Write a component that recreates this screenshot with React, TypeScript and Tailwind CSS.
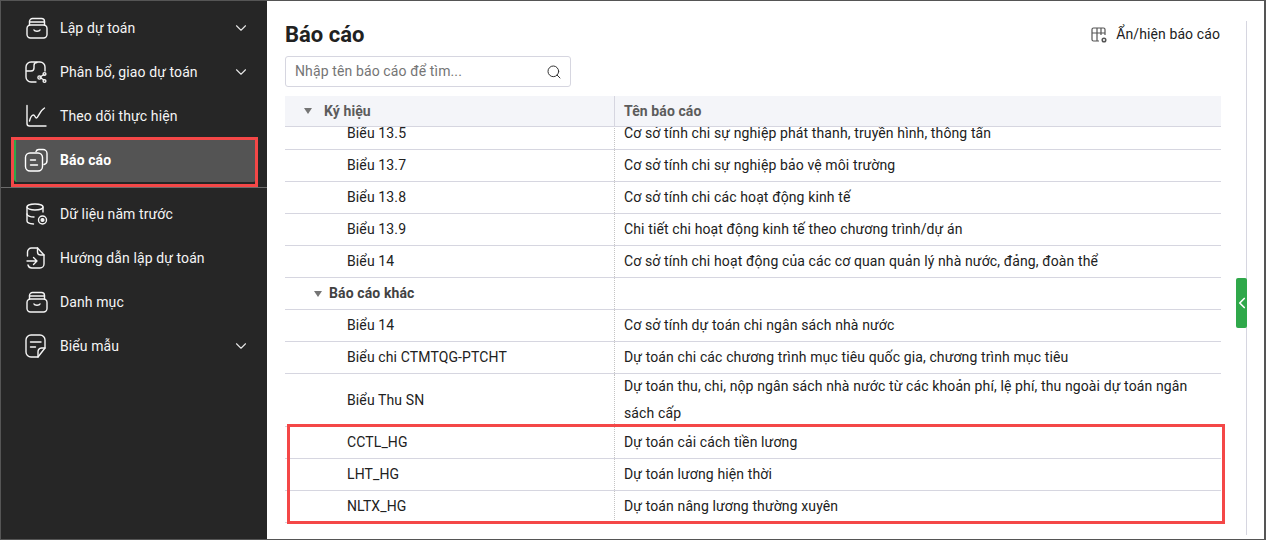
import { ChevronDown, ChevronLeft, Search } from "lucide-react";
import type { ReactNode } from "react";

type Row = { code: string; name: string; group?: boolean; tall?: boolean };

const rows: Row[] = [
  { code: "Biểu 13.5", name: "Cơ sở tính chi sự nghiệp phát thanh, truyền hình, thông tấn" },
  { code: "Biểu 13.7", name: "Cơ sở tính chi sự nghiệp bảo vệ môi trường" },
  { code: "Biểu 13.8", name: "Cơ sở tính chi các hoạt động kinh tế" },
  { code: "Biểu 13.9", name: "Chi tiết chi hoạt động kinh tế theo chương trình/dự án" },
  { code: "Biểu 14", name: "Cơ sở tính chi hoạt động của các cơ quan quản lý nhà nước, đảng, đoàn thể" },
  { code: "Báo cáo khác", name: "", group: true },
  { code: "Biểu 14", name: "Cơ sở tính dự toán chi ngân sách nhà nước" },
  { code: "Biểu chi CTMTQG-PTCHT", name: "Dự toán chi các chương trình mục tiêu quốc gia, chương trình mục tiêu" },
  { code: "Biểu Thu SN", name: "Dự toán thu, chi, nộp ngân sách nhà nước từ các khoản phí, lệ phí, thu ngoài dự toán ngân sách cấp", tall: true },
  { code: "CCTL_HG", name: "Dự toán cải cách tiền lương" },
  { code: "LHT_HG", name: "Dự toán lương hiện thời" },
  { code: "NLTX_HG", name: "Dự toán nâng lương thường xuyên" },
];

function Glyph({ children }: { children: ReactNode }) {
  return (
    <svg width="24" height="24" viewBox="0 0 24 24" fill="none" stroke="currentColor" strokeWidth="1.4" strokeLinecap="round" strokeLinejoin="round">
      {children}
    </svg>
  );
}

const boxIcon = (
  <Glyph>
    <rect x="2" y="9" width="20" height="13" rx="3.5" />
    <path d="M4.500 9V5.500A3 3 0 0 1 7.500 2.500h9a3 3 0 0 1 3 3V9" />
    <path d="M4.500 6h15" />
    <path d="M9 14c.6 1.600 5.400 1.600 6 0" />
  </Glyph>
);

const shareIcon = (
  <Glyph>
    <path d="M11 22H6a5 5 0 0 1-5-5V7a5 5 0 0 1 5-5h9a5 5 0 0 1 5 5v4" />
    <path d="M1.500 11H6a3 3 0 0 0 3-3V5.500a3 3 0 0 1 3-3" />
    <path d="M15 17l4-2.500M15 17.500l4 2.500" />
    <circle cx="14.500" cy="17.500" r="1.600" />
    <circle cx="19.500" cy="14" r="1.400" />
    <circle cx="19.500" cy="21" r="1.400" />
  </Glyph>
);

const chartIcon = (
  <Glyph>
    <path d="M2 1.500v18a2.500 2.500 0 0 0 2.500 2.500H21" />
    <path d="M4.500 17c1-4 2.500-6 4-6s1.500 3 3 3 3-7 8-10" />
  </Glyph>
);

const reportIcon = (
  <Glyph>
    <path d="M12 3.500A3 3 0 0 1 15 1.500h4a4 4 0 0 1 4 4v7a4 4 0 0 1-3 4" />
    <rect x="1.500" y="5" width="17" height="18" rx="4.500" />
    <path d="M6.500 12h5M6.500 17h7" />
  </Glyph>
);

const dataIcon = (
  <Glyph>
    <ellipse cx="10" cy="5" rx="8" ry="3" />
    <path d="M2 5v14c0 1.500 3 2.700 6.500 3" />
    <path d="M18 5v5" />
    <path d="M2 12c0 1.500 3 3 7 3" />
    <circle cx="17.500" cy="18" r="4" />
    <circle cx="17.500" cy="18" r="1.400" fill="currentColor" />
  </Glyph>
);

const guideIcon = (
  <Glyph>
    <path d="M2.500 10V6a4 4 0 0 1 4-4h6l6.500 7v9a4 4 0 0 1-4 4h-8a4 4 0 0 1-4-3" />
    <path d="M12.500 2v4a3 3 0 0 0 3 3H19" />
    <path d="M2 15h10M8.500 11.500 12 15l-3.500 3.500" />
  </Glyph>
);

const formIcon = (
  <Glyph>
    <path d="M13 23H6a5 5 0 0 1-5-5V6a5 5 0 0 1 5-5h9a5 5 0 0 1 5 5v8z" />
    <path d="M13 23v-5a4 4 0 0 1 3.500-4H20" />
    <path d="M5.500 8H16M5.500 13h5" />
  </Glyph>
);

function NavItem({ icon, label, chevron }: { icon: ReactNode; label: string; chevron?: boolean }) {
  return (
    <div className="flex h-11 items-center pl-[24px] pr-[17px] text-[14px] tracking-[0.1px] text-[#f5f5f5]">
      <span className="mr-[11px] flex h-6 w-6 items-center justify-center">{icon}</span>
      <span className="flex-1">{label}</span>
      {chevron && <ChevronDown size={18} strokeWidth={1.5} className="text-[#e5e5e5]" />}
    </div>
  );
}

function Sidebar() {
  return (
    <aside className="relative w-[266px] shrink-0 bg-[#262626] pt-[5px]">
      <NavItem icon={boxIcon} label="Lập dự toán" chevron />
      <NavItem icon={shareIcon} label="Phân bổ, giao dự toán" chevron />
      <NavItem icon={chartIcon} label="Theo dõi thực hiện" />
      <div className="ml-[13px] mr-[11px] flex h-[44px] items-center rounded-[3px] border-l-2 border-[#2fa84a] bg-[#545454] pl-[8px] text-[14px] font-bold tracking-[0.1px] text-white">
        <span className="mr-[12px] flex h-6 w-6 items-center justify-center">{reportIcon}</span>
        Báo cáo
      </div>
      <div className="mt-[5px] mb-[4px] h-px bg-[#6b6b6b]" />
      <NavItem icon={dataIcon} label="Dữ liệu năm trước" />
      <NavItem icon={guideIcon} label="Hướng dẫn lập dự toán" />
      <NavItem icon={boxIcon} label="Danh mục" />
      <NavItem icon={formIcon} label="Biểu mẫu" chevron />
      <div className="absolute left-[10px] top-[136px] h-[50px] w-[247px] border-[3px] border-[#f44747]" />
    </aside>
  );
}

function Triangle() {
  return <span className="h-0 w-0 border-x-[4.5px] border-t-[6px] border-x-transparent border-t-[#757575]" />;
}

function TableRow({ row }: { row: Row }) {
  return (
    <div className={`flex border-b border-[#d6d6e0] text-[14px] leading-[27px] tracking-[0.12px] text-[#212121] ${row.tall ? "h-[53px]" : "h-[32px]"}`}>
      <div className="flex w-[330px] shrink-0 items-center border-r border-dotted border-[#c4c4c4]">
        {row.group ? (
          <span className="flex items-center pl-[29px] font-bold text-[#424242]">
            <Triangle />
            <span className="ml-[7px]">{row.code}</span>
          </span>
        ) : (
          <span className="pl-[62px]">{row.code}</span>
        )}
      </div>
      <div className="flex flex-1 items-center pl-[9px] pr-[24px]">
        <span>{row.name}</span>
      </div>
    </div>
  );
}

function Content() {
  return (
    <div className="w-[936px] shrink-0">
      <div className="flex h-[27px] items-center justify-between">
        <h1 className="text-[22px] leading-none font-bold text-[#212121]">Báo cáo</h1>
        <div className="flex items-center pr-px text-[14px] tracking-[0.1px] text-[#212121]">
          <svg width="18" height="18" viewBox="0 0 18 18" fill="none" stroke="#555" strokeWidth="1.200" className="mr-[8px]">
            <path d="M9 15H3.500A1.500 1.500 0 0 1 2 13.500v-10A1.500 1.500 0 0 1 3.500 2h10A1.500 1.500 0 0 1 15 3.500V9" />
            <path d="M2 7h13M7 2v13M11 2v7" />
            <circle cx="14" cy="14" r="1.800" strokeWidth="1.500" />
          </svg>
          Ẩn/hiện báo cáo
        </div>
      </div>
      <div className="mt-[8px] flex h-[31px] w-[286px] items-center justify-between rounded-[3px] border border-[#d6d6e0] pl-[9px] pr-[8px] text-[14px] tracking-[0.12px] text-[#757575]">
        <span>Nhập tên báo cáo để tìm...</span>
        <Search size={16} strokeWidth={1.5} className="text-[#333]" />
      </div>
      <div className="mt-[9px] flex h-[31px] border-b border-[#d6d6e0] bg-[#f4f5f9] text-[14px] font-bold tracking-[0.1px] text-[#5c5c5c]">
        <div className="flex w-[330px] shrink-0 items-center border-r border-[#d6d6e0] pl-[19px]">
          <Triangle />
          <span className="ml-[12px]">Ký hiệu</span>
        </div>
        <div className="flex items-center pl-[9px]">Tên báo cáo</div>
      </div>
      <div className="h-[396px] overflow-hidden">
        <div className="-mt-[9px]">
          {rows.map((row, i) => (
            <TableRow key={i} row={row} />
          ))}
        </div>
      </div>
    </div>
  );
}

export default function App() {
  return (
    <div className="flex h-[540px] w-[1266px] overflow-hidden border-y border-l border-r-2 border-[#555] bg-white font-['Roboto',sans-serif]">
      <Sidebar />
      <main className="relative flex flex-1 pl-[18px] pt-[20px]">
        <Content />
        <div className="ml-[25px] h-[514px] w-px bg-[#d6d6e0]" />
        <div className="absolute left-[969px] top-[277px] flex h-[50px] w-[11px] items-center justify-center rounded-[2px] bg-[#2fa84a] text-white">
          <ChevronLeft size={18} strokeWidth={2.2} className="shrink-0" />
        </div>
        <div className="absolute left-[20px] top-[423px] h-[100px] w-[938px] border-[3px] border-[#f44747]" />
      </main>
    </div>
  );
}
